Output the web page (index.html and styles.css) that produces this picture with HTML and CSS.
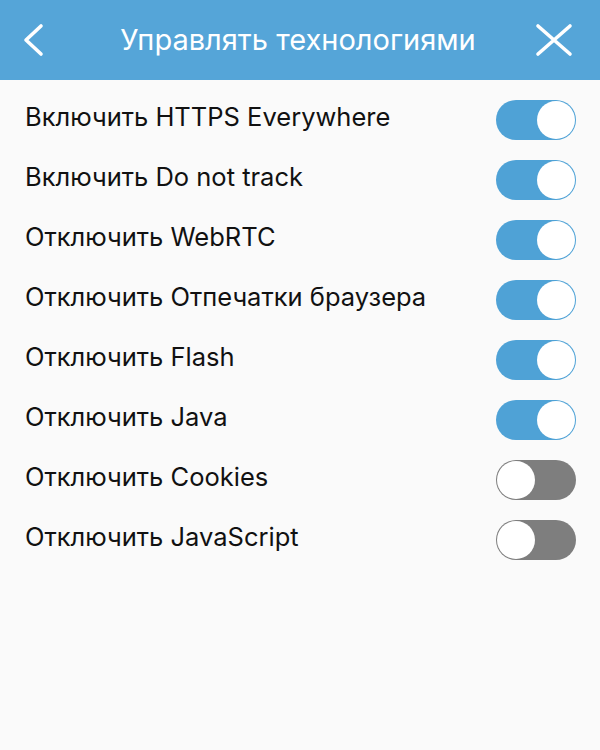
FILE: index.html
```html
<!DOCTYPE html>
<html lang="ru">
<head>
<meta charset="utf-8">
<title>Управлять технологиями</title>
<link rel="stylesheet" href="styles.css">
</head>
<body>
<header class="topbar">
  <button class="icon-btn back" aria-label="Назад">
    <svg width="24" height="36" viewBox="0 0 24 36"><path d="M19 4 L4 18 L19 32" fill="none" stroke="#fff" stroke-width="3.6" stroke-linecap="round" stroke-linejoin="round"/></svg>
  </button>
  <h1 class="title">Управлять технологиями</h1>
  <button class="icon-btn close" aria-label="Закрыть">
    <svg width="40" height="36" viewBox="0 0 40 36"><path d="M4 4 L36 32 M36 4 L4 32" fill="none" stroke="#fff" stroke-width="3.6" stroke-linecap="round"/></svg>
  </button>
</header>
<ul class="settings">
  <li class="row"><span class="label">Включить HTTPS Everywhere</span><span class="switch on"><span class="knob"></span></span></li>
  <li class="row"><span class="label">Включить Do not track</span><span class="switch on"><span class="knob"></span></span></li>
  <li class="row"><span class="label">Отключить WebRTC</span><span class="switch on"><span class="knob"></span></span></li>
  <li class="row"><span class="label">Отключить Отпечатки браузера</span><span class="switch on"><span class="knob"></span></span></li>
  <li class="row"><span class="label">Отключить Flash</span><span class="switch on"><span class="knob"></span></span></li>
  <li class="row"><span class="label">Отключить Java</span><span class="switch on"><span class="knob"></span></span></li>
  <li class="row"><span class="label">Отключить Cookies</span><span class="switch off"><span class="knob"></span></span></li>
  <li class="row"><span class="label">Отключить JavaScript</span><span class="switch off"><span class="knob"></span></span></li>
</ul>
</body>
</html>
```
FILE: styles.css
```css
html, body {
  margin: 0;
  padding: 0;
  background: #fafafa;
  height: 100%;
}
body {
  font-family: Inter, "Liberation Sans", Arial, sans-serif;
  color: #111;
}
.topbar {
  height: 80px;
  background: #55a5d8;
  display: grid;
  grid-template-columns: 1fr auto 1fr;
  align-items: center;
  padding: 0 26px 0 22px;
  box-sizing: border-box;
}
.icon-btn {
  background: none;
  border: 0;
  padding: 0;
  display: flex;
  align-items: center;
}
.icon-btn.back {
  justify-self: start;
}
.icon-btn.close {
  justify-self: end;
}
.title {
  margin: 0 0 2px;
  font-family: Inter, "Liberation Sans", sans-serif;
  font-weight: 400;
  font-size: 29px;
  color: #fff;
}
.settings {
  list-style: none;
  margin: 0;
  padding: 0;
  padding-top: 10px;
}
.row {
  height: 60px;
  display: flex;
  align-items: center;
  justify-content: space-between;
  padding: 0 24px 0 25px;
}
.label {
  font-size: 25.5px;
  margin-top: -7px;
}
.switch {
  width: 80px;
  height: 40px;
  border-radius: 20px;
  box-sizing: border-box;
  display: flex;
  align-items: center;
  padding: 1px;
}
.switch.on {
  background: #4fa2d6;
  justify-content: flex-end;
}
.switch.off {
  background: #7e7e7e;
  justify-content: flex-start;
}
.knob {
  width: 38px;
  height: 38px;
  border-radius: 50%;
  background: #fff;
}
```
